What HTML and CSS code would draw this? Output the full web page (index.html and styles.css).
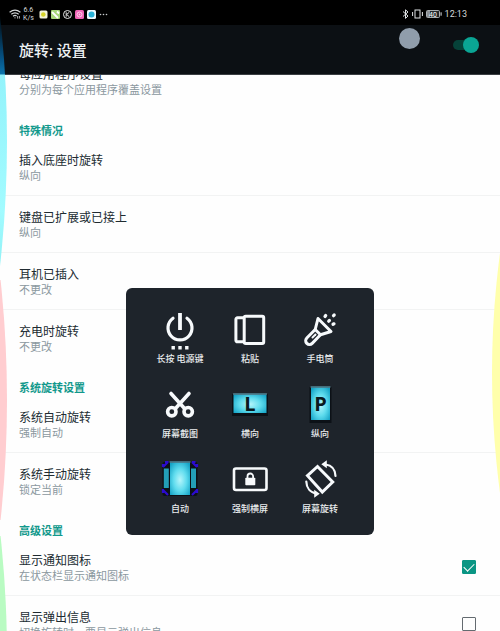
FILE: index.html
```
<!DOCTYPE html>
<html lang="zh-CN">
<head>
  <meta charset="UTF-8" />
  <meta name="viewport" content="width=device-width, initial-scale=1" />
  <title>旋转: 设置</title>
  <link rel="stylesheet" href="styles.css">
</head>
<body>
  <div class="statusbar">
    <div class="status-left">
      <svg class="wifi" viewBox="0 0 12 10" fill="none" stroke="#d5d8da" stroke-width="1.2">
        <path d="M0.6 3.3Q6 -1 11.4 3.3M2.3 5.3Q6 2.4 9.7 5.3M4 7.2Q6 5.8 7.6 7" />
        <circle cx="6" cy="8.8" r="0.6" fill="#d5d8da" stroke="none" />
        <path d="M8.6 7v2.6M10.4 7v2.6" stroke-width="0.8" />
      </svg>
      <div class="speed"><span>6.6</span><span>K/s</span></div>
      <div class="notices">
        <svg viewBox="0 0 9 9"><rect x="0.5" y="0.5" width="8" height="8" rx="1.5" fill="#f3f3dc" /><circle cx="4.3" cy="4.5" r="2.3" fill="#d5d32a" /></svg>
        <svg viewBox="0 0 9 9"><rect width="9" height="9" rx="1" fill="#a8d67c" /><path d="M1 2l3 3M4 5l3 3M6 1.5l2 2" stroke="#fff" stroke-width="1.8" /></svg>
        <svg viewBox="0 0 9 9" fill="none" stroke="#e6e6e6"><circle cx="4.5" cy="4.5" r="4" /><path d="M3.2 2.3v4.4M6.3 2.3L3.6 4.5l2.7 2.2" /></svg>
        <svg viewBox="0 0 9 9"><rect width="9" height="9" rx="1.5" fill="#ee62b4" /><circle cx="4.5" cy="4.5" r="2.5" fill="none" stroke="#ffd0ec" /><circle cx="4.5" cy="4.5" r="0.9" fill="#ffd0ec" /></svg>
        <svg viewBox="0 0 9 9"><rect width="9" height="9" rx="1.5" fill="#eefaff" /><circle cx="4.5" cy="4.5" r="3" fill="#29b2d8" /></svg>
        <svg viewBox="0 0 9 9" fill="#c9ccce"><circle cx="1.5" cy="4.5" r="0.8" /><circle cx="4.5" cy="4.5" r="0.8" /><circle cx="7.5" cy="4.5" r="0.8" /></svg>
      </div>
    </div>
    <div class="status-right">
      <svg class="bluetooth" viewBox="0 0 7 10" fill="none" stroke="#e0e3e5"><path d="M1 2.5l5 4.5-2.5 2.4V0.8L6 3 1 7.5" /></svg>
      <svg class="vibrate" viewBox="0 0 11 10" fill="none" stroke="#e0e3e5"><rect x="3" y="1" width="5" height="8" /><path d="M0.6 3v4M10.4 3v4" /></svg>
      <svg class="battery" viewBox="0 0 16 8"><rect x="0.5" y="0.5" width="13" height="7" rx="1" fill="#24282b" stroke="#a9adb0" /><rect x="1" y="1" width="3" height="6" fill="#8b9094" /><rect x="14.5" y="2.3" width="1.2" height="3.4" fill="#b9bdc0" /><text x="7" y="6.500" text-anchor="middle">40</text></svg>
      <span class="clock">12:13</span>
    </div>
  </div>

  <header class="appbar">
    <h1>旋转: 设置</h1>
    <input class="switch" type="checkbox" role="switch" aria-label="旋转" checked />
  </header>

  <main class="settings">
    <div class="list">
      <section>
        <div class="row"><span class="name">每应用程序设置</span><span class="value">分别为每个应用程序覆盖设置</span></div>
      </section>

      <section>
        <h2>特殊情况</h2>
        <div class="row"><span class="name">插入底座时旋转</span><span class="value">纵向</span></div>
        <div class="row"><span class="name">键盘已扩展或已接上</span><span class="value">纵向</span></div>
        <div class="row"><span class="name">耳机已插入</span><span class="value">不更改</span></div>
        <div class="row"><span class="name">充电时旋转</span><span class="value">不更改</span></div>
      </section>

      <section>
        <h2>系统旋转设置</h2>
        <div class="row"><span class="name">系统自动旋转</span><span class="value">强制自动</span></div>
        <div class="row"><span class="name">系统手动旋转</span><span class="value">锁定当前</span></div>
      </section>

      <section>
        <h2>高级设置</h2>
        <label class="row check-row">
          <span class="texts"><span class="name">显示通知图标</span><span class="value">在状态栏显示通知图标</span></span>
          <input class="check" type="checkbox" checked />
        </label>
        <label class="row check-row">
          <span class="texts"><span class="name">显示弹出信息</span><span class="value">切换旋转时，要显示弹出信息</span></span>
          <input class="check" type="checkbox" />
        </label>
      </section>
    </div>
  </main>

  <!-- edge glow -->
  <div class="edge edge-cyan"></div>
  <div class="edge edge-pink"></div>
  <div class="edge edge-green"></div>
  <div class="edge edge-yellow"></div>

  <div class="touch-dot"></div>

  <div class="popup">
    <button type="button" class="tool">
      <svg viewBox="0 0 40 40" fill="none" stroke="#f7fafc" stroke-width="3.200">
        <path d="M13 8.2A12 12 0 1 0 27 8.2" stroke-linecap="round" />
        <path d="M20 3v17" stroke-width="3.8" />
        <path d="M11.5 37.7h3.4M18.3 37.7h3.4M25.1 37.7h3.4" stroke-width="3.4" />
      </svg>
      <span>长按 电源键</span>
    </button>
    <button type="button" class="tool">
      <svg viewBox="0 0 40 40" fill="none" stroke="#f7fafc" stroke-width="3">
        <rect x="14.2" y="6.2" width="19.5" height="27.2" rx="1.5" />
        <path d="M14.5 7.8H7.500a1.6 1.6 0 0 0-1.6 1.6v20.8A1.6 1.6 0 0 0 7.500 31.8h7" />
      </svg>
      <span>粘贴</span>
    </button>
    <button type="button" class="tool">
      <svg viewBox="0 0 40 40" fill="none" stroke="#f7fafc" stroke-width="3" stroke-linecap="round" stroke-linejoin="round">
        <path d="M18 8.500L31 21.500 20.500 24.800 15.200 19.500z" />
        <path d="M15.200 19.500L6.800 28a3.800 3.800 0 0 0 5.400 5.400l8.300-8.600" />
        <path d="M12.500 27.500l3-3" stroke-width="2" />
        <path d="M25 6.500l0.700-1M28.700 11.200l0.700-0.700M33.500 5.700l0.700-0.700M33 14.300l1-0.500" stroke-width="3.200" />
      </svg>
      <span>手电筒</span>
    </button>

    <button type="button" class="tool">
      <svg viewBox="0 0 40 40" fill="none" stroke="#f7fafc" stroke-width="3.600" stroke-linecap="round">
        <path d="M11 8.500L24.300 23.200M29 8.500L15.700 23.200" />
        <circle cx="11.800" cy="26.700" r="4.200" />
        <circle cx="28.200" cy="26.700" r="4.200" />
      </svg>
      <span>屏幕截图</span>
    </button>
    <button type="button" class="tool">
      <svg viewBox="0 0 40 40">
        <defs>
          <radialGradient id="glow" cx="50%" cy="55%" r="65%">
            <stop offset="0" stop-color="#b5f5fb" />
            <stop offset="0.5" stop-color="#5fdcee" />
            <stop offset="1" stop-color="#14a3c6" />
          </radialGradient>
        </defs>
        <rect x="2" y="9" width="36" height="22" fill="#0c1117" />
        <rect x="3.500" y="8.500" width="33" height="19.500" fill="url(#glow)" />
        <path d="M3 9h34" stroke="#52717c" stroke-width="1.500" />
        <text class="badge-letter" x="20" y="26" text-anchor="middle">L</text>
      </svg>
      <span>横向</span>
    </button>
    <button type="button" class="tool">
      <svg viewBox="0 0 40 40">
        <rect x="9.500" y="2" width="22" height="36" fill="#0c1117" />
        <rect x="11" y="1.500" width="19" height="33.500" fill="url(#glow)" />
        <path d="M10.500 2h20" stroke="#52717c" stroke-width="1.500" />
        <text class="badge-letter" x="20.500" y="26" text-anchor="middle">P</text>
      </svg>
      <span>纵向</span>
    </button>

    <button type="button" class="tool">
      <svg viewBox="0 0 40 40">
        <rect x="2.500" y="2" width="35" height="34" rx="2" fill="#0c1117" />
        <rect x="3.800" y="8.500" width="5" height="19.500" fill="#239fb8" />
        <rect x="31" y="8.500" width="5" height="19.500" fill="#239fb8" />
        <path d="M3 7l5-5M5 2h3.500M32 2h3.500M32 2l5 5M3 30l5 5M3 29v4M37 30l-5 5M37 29v4M3 7V4M37 7V4" stroke="#2c0bd0" stroke-width="2.200" fill="none" />
        <rect x="10" y="1.500" width="20" height="33.500" fill="url(#glow)" />
        <path d="M9.500 2h21" stroke="#52717c" stroke-width="1.500" />
      </svg>
      <span>自动</span>
    </button>
    <button type="button" class="tool">
      <svg viewBox="0 0 40 40" fill="none" stroke="#f7fafc">
        <rect x="4" y="8.500" width="32.500" height="21.500" rx="2" stroke-width="2.600" />
        <rect x="15.300" y="17.800" width="10" height="7.400" rx="0.800" fill="#f7fafc" stroke="none" />
        <path d="M17.500 18v-1.700a2.800 2.800 0 0 1 5.600 0V18" stroke-width="1.800" />
      </svg>
      <span>强制横屏</span>
    </button>
    <button type="button" class="tool">
      <svg viewBox="0 0 40 40" fill="none" stroke="#f7fafc" stroke-width="3">
        <path d="M17.500 6.500L7.500 15.700 22.300 32 32.700 22z" />
        <path d="M25.500 4.500c6 0.800 9.700 5 10 11.500M6.300 21.500c0.200 6.500 4 11.200 10 12" stroke-width="2.200" stroke-linecap="round" />
        <path d="M21.300 4.300l5.500-4v8zM19.700 33.700l-5.500-4v8z" fill="#f7fafc" stroke="none" />
      </svg>
      <span>屏幕旋转</span>
    </button>
  </div>
</body>
</html>
```
FILE: styles.css
```
* {
  box-sizing: border-box;
}

body {
  margin: 0;
  height: 100vh;
  position: relative;
  overflow: hidden;
  display: flex;
  flex-direction: column;
  background: #fefefe;
  color: #202b31;
  font-family: Roboto, "Noto Sans CJK SC", sans-serif;
  font-size: 12px;
}

svg {
  display: block;
}

/* status bar */
.statusbar {
  display: flex;
  justify-content: space-between;
  align-items: center;
  flex: none;
  height: 25px;
  padding: 3px 33px 0 9px;
  background: #000;
  color: #d5d8da;
}

.status-left,
.status-right {
  display: flex;
  align-items: center;
}

.status-right {
  gap: 3px;
}

.wifi {
  width: 12px;
  height: 10px;
}

.speed {
  display: flex;
  flex-direction: column;
  margin: 0 5px 0 2px;
  font-size: 7px;
  line-height: 8px;
  text-align: center;
}

.notices {
  display: flex;
  gap: 3px;
}

.notices svg {
  width: 9px;
  height: 9px;
}

.bluetooth {
  width: 7px;
  height: 10px;
}

.vibrate {
  width: 11px;
  height: 10px;
}

.battery {
  width: 16px;
  height: 8px;
}

.battery text {
  fill: #fff;
  font-size: 7px;
}

.clock {
  font-size: 9px;
  line-height: 12px;
}

/* title bar */
.appbar {
  display: flex;
  justify-content: space-between;
  align-items: flex-start;
  flex: none;
  height: 50px;
  padding: 12px 21px 0 19px;
  background: #0c1014;
  border-bottom: 1px solid #3a3e42;
}

h1 {
  margin: 0;
  color: #eef1f3;
  font-size: 15px;
  font-weight: 500;
  line-height: 28px;
}

.switch {
  appearance: none;
  position: relative;
  width: 26px;
  height: 16px;
  margin: 0;
}

.switch::before {
  content: "";
  position: absolute;
  left: 0;
  right: 3px;
  top: 3px;
  height: 10px;
  border-radius: 5px;
  background: #064239;
}

.switch::after {
  content: "";
  position: absolute;
  left: 0;
  top: 0;
  width: 16px;
  height: 16px;
  border-radius: 50%;
  background: #b0b7bc;
}

.switch:checked::after {
  left: auto;
  right: 0;
  background: #0aa594;
}

/* settings list, scrolled a little */
.settings {
  flex: 1;
  min-height: 0;
  overflow: hidden;
}

.list {
  margin-top: -22px;
}

h2 {
  height: 29px;
  margin: 0;
  padding: 14px 19px 0;
  color: #12998c;
  font-size: 11px;
  font-weight: 700;
  line-height: 16px;
}

.row {
  display: flex;
  flex-direction: column;
  height: 57px;
  padding: 14px 24px 0 19px;
  border-bottom: 1px solid #f2f3f3;
}

.row:last-child {
  border-color: transparent;
}

.name {
  font-size: 12px;
  line-height: 16px;
}

.value {
  color: #8b989f;
  font-size: 11px;
  line-height: 16px;
}

.check-row {
  flex-direction: row;
  justify-content: space-between;
}

.texts {
  display: flex;
  flex-direction: column;
}

.check {
  appearance: none;
  width: 14px;
  height: 14px;
  margin: 7px 0 0;
  border: 1px solid #646b70;
  border-radius: 1px;
}

.check:checked {
  border-color: #0a9684;
  background: #0a9684;
}

.check:checked::after {
  content: "";
  display: block;
  width: 9px;
  height: 5px;
  margin: 2px 0 0 1px;
  border: solid #fff;
  border-width: 0 0 1px 1px;
  transform: rotate(-45deg);
}

/* glow along the screen edges */
.edge {
  position: absolute;
  left: 0;
  width: 7px;
  clip-path: circle(1120px at -1113px 50%);
  pointer-events: none;
}

.edge-cyan {
  top: 10px;
  height: 262px;
  background: linear-gradient(#000 0, #06568a 50px, #0c74ac 64px, #93f3fb 65px, #a2fbff 200px, #8ff0f5);
}

.edge-pink {
  top: 280px;
  height: 240px;
  background: #ffcdd0;
}

.edge-green {
  top: 536px;
  height: 240px;
  background: #b9fbc2;
}

.edge-yellow {
  left: auto;
  right: 0;
  top: 252px;
  width: 8px;
  height: 242px;
  clip-path: circle(900px at 900px 50%);
  background: #ffffab;
}

.touch-dot {
  position: absolute;
  right: 80px;
  top: 28px;
  width: 21px;
  height: 21px;
  border-radius: 50%;
  background: #909dab;
}

/* quick tools */
.popup {
  position: absolute;
  left: 50%;
  top: 288px;
  transform: translateX(-50%);
  display: grid;
  grid-template-columns: repeat(3, 70px);
  row-gap: 19px;
  padding: 22px 19px 19px;
  border-radius: 6px;
  background: #1e242b;
}

.tool {
  display: flex;
  flex-direction: column;
  align-items: center;
  gap: 4px;
  padding: 0;
  border: none;
  background: none;
  color: #e9ecee;
  font-family: inherit;
  font-size: 9px;
  font-weight: 500;
  line-height: 13px;
  white-space: nowrap;
  cursor: pointer;
}

.tool svg {
  width: 40px;
  height: 40px;
  margin-bottom: -1px;
}

.badge-letter {
  fill: #0a1a20;
  font-family: "Open Sans", sans-serif;
  font-size: 20px;
  font-weight: 700;
}
```
